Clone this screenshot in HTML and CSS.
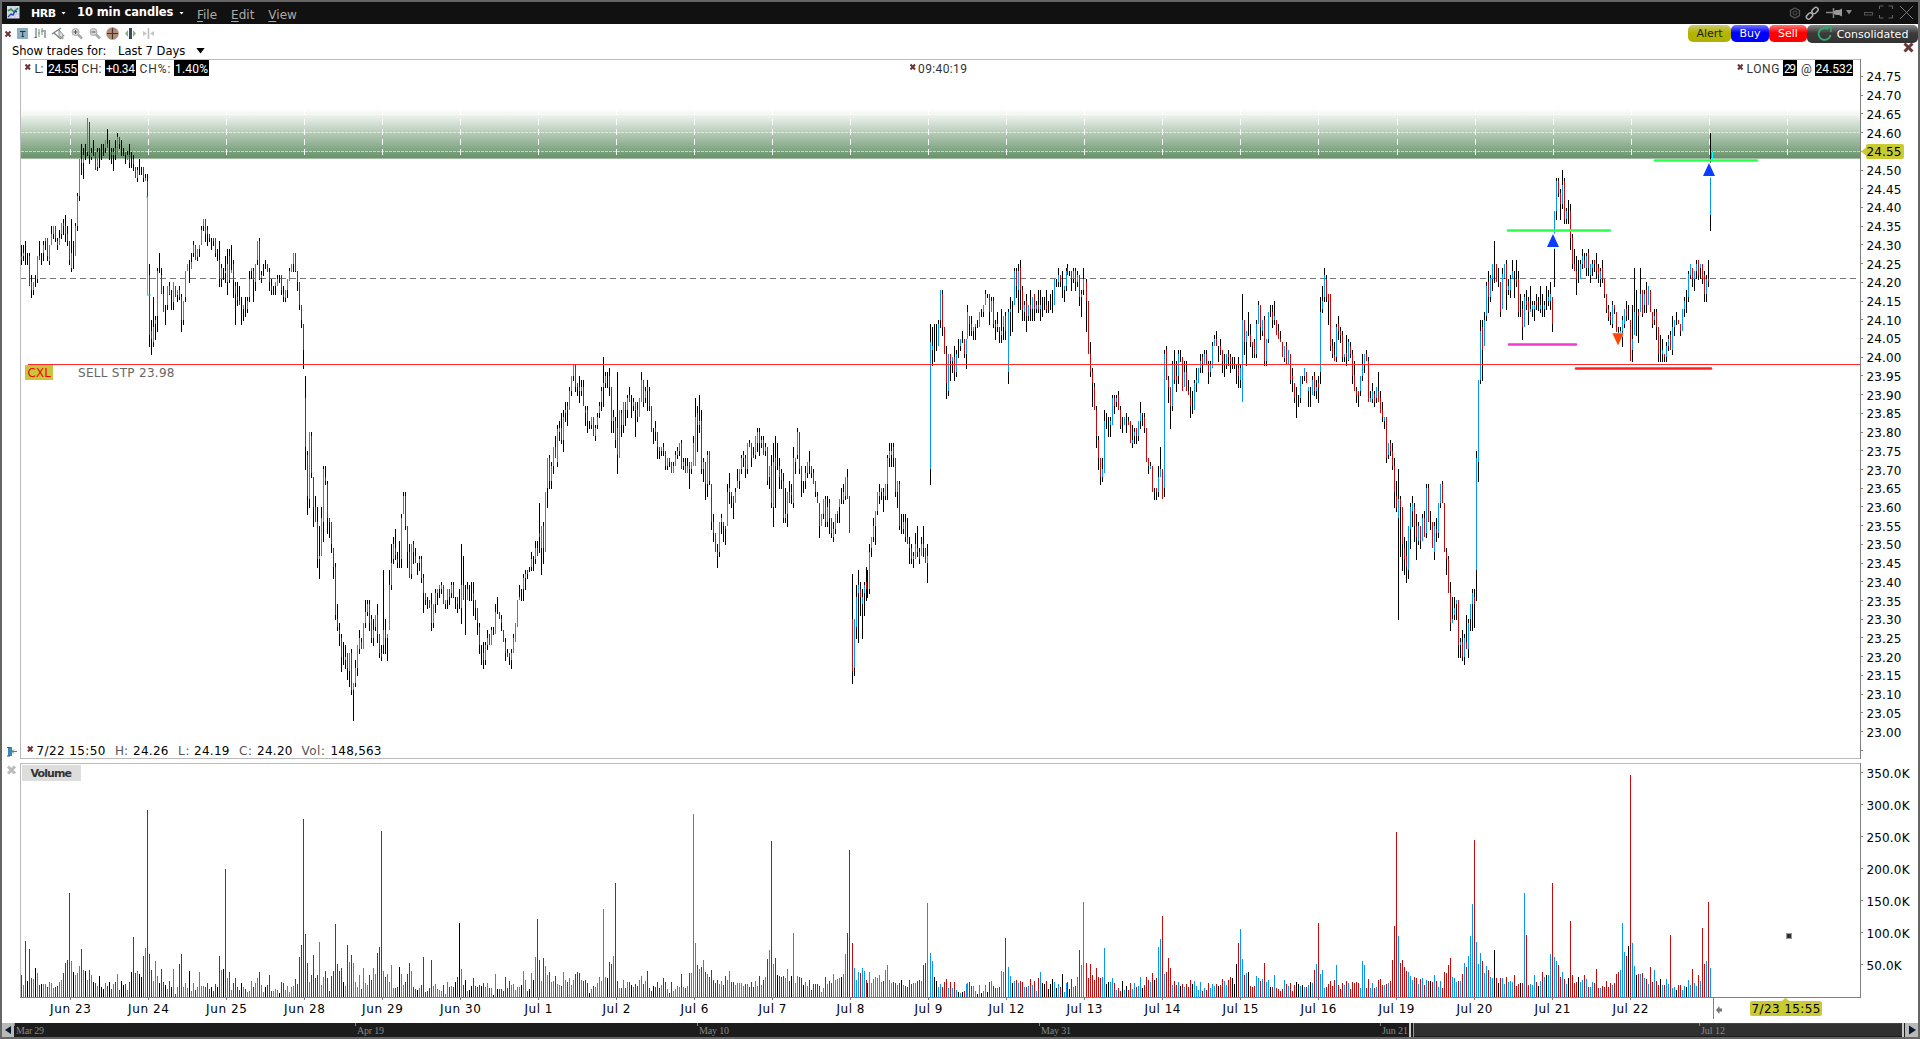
FILE: index.html
```html
<!DOCTYPE html>
<html lang="en">
<head>
<meta charset="utf-8">
<title>HRB - 10 min candles</title>
<link rel="stylesheet" href="styles.css">
</head>
<body>
<div class="window">
  <header class="titlebar">
    <svg class="app-icon" width="13" height="13" viewBox="0 0 13 13"><rect width="12.5" height="12.5" fill="#d9dcec"/><path d="M0 4h12M0 8h12M4 0v12M8 0v12" stroke="#b6b9d0" stroke-width=".6"/><path d="M1 5l3-2 3 3 4-4" stroke="#2a9a3c" stroke-width="1.6" fill="none"/><path d="M1 11l3-3 2 1 2-4 2 1" stroke="#2648a8" stroke-width="1.4" fill="none"/></svg>
    <b class="symbol">HRB</b><i class="caret"></i>
    <b class="interval">10 min candles</b><i class="caret"></i>
    <nav class="menu"><span><u>F</u>ile</span><span><u>E</u>dit</span><span><u>V</u>iew</span></nav>
    <svg class="window-tools" width="132" height="22" viewBox="1786 2 132 22" fill="none" stroke="#777">
      <g stroke="#555"><path d="M1795 8l4.500 2.500v5l-4.500 2.500l-4.500-2.500v-5z" stroke-width="1.300"/><circle cx="1795" cy="13" r="2"/></g>
      <g stroke="#aaa" stroke-width="1.500"><rect x="-3.500" y="-2.200" width="7" height="4.400" rx="2.200" transform="translate(1809.500 16) rotate(-45)"/><rect x="-3.500" y="-2.200" width="7" height="4.400" rx="2.200" transform="translate(1815 10.500) rotate(-45)"/></g>
      <path d="M1826 12.500h7M1833.500 8v10" stroke="#888" stroke-width="1.500"/><path d="M1834 11l2-1h3l3-1.500v8l-3-1.500h-3l-2-1z" fill="#999" stroke="none"/>
      <path d="M1846 10h6l-3 4.500z" fill="#888" stroke="none"/>
      <rect x="1864.500" y="12.500" width="8" height="2.500" stroke="#555"/>
      <path d="M1879.500 9v-3h4M1888.500 6h4v3M1892.500 15v3h-4M1883.500 18h-4v-3" stroke="#666"/>
      <path d="M1900 6l13 13M1913 6l-13 13" stroke="#777"/>
    </svg>
  </header>
  <div class="toolbar">
    <svg class="tools" width="160" height="18" viewBox="2 25 160 18" fill="none">
      <path d="M5.500 31.500l5 5M10.500 31.500l-5 5" stroke="#6b3333" stroke-width="2"/>
      <rect x="17" y="28" width="11" height="11" fill="#8fb0c0"/><path d="M20 31.500h5.500M22.700 31.500v5M21.500 36.500h2.500" stroke="#24333c"/>
      <path d="M36 28v10M34.500 37.500h2M45 30v8M44 31h-2.500" stroke="#51527f"/><path d="M39 29v8M42 28v7M38 33h2" stroke="#67a067"/>
      <path d="M52 34l9-6M54 33l7 6" stroke="#788" stroke-width="1.500"/><path d="M59 30v8l2-1.500 1.200 2.500 1-.6-1-2.400h2z" fill="#ddd" stroke="#777" stroke-width=".8"/>
      <g stroke="#aaa"><circle cx="75.500" cy="32" r="3.500" fill="#d7d7d7"/><circle cx="93.500" cy="32" r="3.500" fill="#d7d7d7"/><path d="M78 34.500l4 4M96 34.500l4 4" stroke-width="2.500"/></g><path d="M73.500 32h4M75.500 30v4M91.500 32h4" stroke="#555"/>
      <circle cx="112.500" cy="33.500" r="6.300" fill="#b18d78"/><path d="M107 33.500h11M112.500 28v11" stroke="#49352c" stroke-width="1.200"/>
      <path d="M130.500 28v11" stroke="#344b59" stroke-width="3"/><path d="M128 30v7l-3-3.500zM133 30v7l3-3.500z" fill="#8da88c"/>
      <path d="M148.500 28v11" stroke="#bbb" stroke-width="1.500"/><path d="M143 31v5l4-2.500zM154 31v5l-4-2.500z" fill="#c5c5c5"/>
    </svg>
    <div class="actions">
      <button class="pill alert">Alert</button><button class="pill buy">Buy</button><button class="pill sell">Sell</button><button class="pill feed"><svg width="16" height="16" viewBox="0 0 16 16"><path d="M11 3A6 6 0 1 0 13.500 9" fill="none" stroke="#2eaf72" stroke-width="1.700"/><path d="M9 1h5v5" fill="none" stroke="#2eaf72" stroke-width="1.400"/></svg>Consolidated</button>
    </div>
  </div>
  <div class="filter">
    <span class="filter-label">Show trades for:</span><span class="filter-value">Last 7 Days</span><i class="drop"></i>
    <svg class="close" width="12" height="12" viewBox="0 0 12 12"><path d="M1.500 1.500l8 8M9.500 1.500l-8 8" stroke="#6b3535" stroke-width="3"/></svg>
  </div>
  <svg class="panel price" viewBox="2 58 1916 703">
    <defs>
      <linearGradient id="zone" x1="0" y1="0" x2="0" y2="1"><stop offset="0" stop-color="#fff"/><stop offset=".12" stop-color="#eff4ef"/><stop offset="1" stop-color="#67936a"/></linearGradient>
      <path id="x" d="M0 0l4.500 5M4.500 0l-4.500 5" stroke="#6b3535" stroke-width="2"/>
    </defs>
    <rect x="21" y="109" width="1839" height="49" fill="url(#zone)"/>
    <path d="M21 158.500H1860" stroke="#a3bca3"/>
    <path d="M21 114.500H1860M21 132.500H1860M21 151.500H1860" stroke="#fff" stroke-opacity=".55" stroke-dasharray="3 1"/>
    <g id="zone-grid" stroke="#fff"></g>
    <path d="M20 278.500H1860" stroke="#777" stroke-dasharray="6 4" class="crisp"/>
    <path class="frame crisp" d="M1860 59.500H20.500V758.500H1860"/>
    <path class="axis crisp" d="M1860.500 59V759"/>
    <g id="candles" class="crisp"></g>
    <path d="M147.500 197V295M146 197h2M147 295h4" stroke="#2fc8c8" fill="none"/>
    <path d="M1712.500 152v10" stroke="#0ff"/>
    <path d="M28 364.500H1860" stroke="#ff2a2a" class="crisp"/>
    <g class="levels">
      <path d="M1655 160.500h102M1508 230.500h102" stroke="#2bff4e"/>
      <path d="M1509 344.500h67" stroke="#f03ad0"/><path d="M1576 368.500h135" stroke="#ff2020"/>
    </g>
    <path d="M1547 247.500h12v-1l-5-12h-2l-5 12zM1703 176.500h12v-1l-5-12h-2l-5 12z" fill="#fff" stroke="#fff" stroke-width="2"/>
    <path d="M1547 247l6-13 6 13zM1703 176l6-13 6 13z" fill="#0a3dff"/><path d="M1612 333h12l-6 13z" fill="#ff4409" stroke="#fff" stroke-width=".5"/>
    <rect x="25" y="365" width="28" height="15" fill="#c7c73f"/><text x="27.500" y="377" textLength="23.500" fill="#f00">CXL</text>
    <text x="78" y="377" textLength="96.500" fill="#666">SELL STP 23.98</text>
    <g class="readout">
      <use href="#x" x="25.500" y="64.500"/><path d="M47 60h31v16H47zM105 60h31v16h-31zM174 60h35v16h-35zM1783 60h14v16h-14zM1815 60h38v16h-38z" fill="#000"/>
      <text x="34.500" y="73" textLength="9">L:</text><text x="48" y="73" textLength="29" class="inv">24.55</text>
      <text x="81.500" y="73" textLength="20">CH:</text><text x="106" y="73" textLength="29" class="inv">+0.34</text>
      <text x="139.500" y="73" textLength="31">CH%:</text><text x="175" y="73" textLength="33" class="inv">1.40%</text>
      <use href="#x" x="910.500" y="64.500"/><text x="918" y="73" textLength="49">09:40:19</text>
      <use href="#x" x="1738" y="64.500"/><text x="1746.500" y="73" textLength="33">LONG</text><text x="1784" y="73" textLength="12" class="inv">29</text><text x="1801" y="73" textLength="11">@</text><text x="1815.500" y="73" textLength="37" class="inv">24.532</text>
    </g>
    <g class="legend">
      <use href="#x" x="28" y="746.500"/><text x="36.500" y="755" textLength="69">7/22 15:50</text>
      <text x="115" y="755" textLength="13" class="dim">H:</text><text x="133" y="755" textLength="35.500">24.26</text>
      <text x="178" y="755" textLength="11.500" class="dim">L:</text><text x="194" y="755" textLength="35.500">24.19</text>
      <text x="239" y="755" textLength="13" class="dim">C:</text><text x="257" y="755" textLength="35.500">24.20</text>
      <text x="301.500" y="755" textLength="23.500" class="dim">Vol:</text><text x="330.500" y="755" textLength="51">148,563</text>
    </g>
    <path d="M8 747h4v9H8z" fill="#3d86b8"/><path d="M7 747.500h3M7 756h3" stroke="#235f90"/><path d="M17 751.500h-5M14 749.500l-2 2 2 2" stroke="#20a050" fill="none"/>
    <g id="price-axis"></g>
    <path d="M1861 151.500l5-4v-1.500q0-2 2-2h34q2 0 2 2v11q0 2-2 2h-34q-2 0-2-2v-1.500z" fill="#caca33"/><text x="1866.500" y="156" textLength="35">24.55</text>
  </svg>
  <svg class="panel volume" viewBox="2 761 1916 262">
    <path class="frame crisp" d="M1860 763.500H20.500V997"/>
    <path class="axis crisp" d="M20 997.500H1860.500V763M1713.500 998v21"/>
    <rect x="22" y="765" width="59" height="16" fill="#ddd"/><text x="30.500" y="777" textLength="41.500" class="tag">Volume</text>
    <path d="M8 766.500l7 7M15 766.500l-7 7" stroke="#bbb" stroke-width="3"/>
    <g id="volume-bars" class="crisp"></g>
    <rect x="1786.500" y="933.500" width="5" height="5" fill="#333" stroke="#9a9a9a"/>
    <path d="M1716 1010l3.500-4v2.500h2.500v3h-2.500v2.500z" fill="#777"/>
    <rect x="1750" y="1001" width="72" height="15" rx="2" fill="#caca33"/><path d="M1782 1001l3.500-3.500 3.500 3.500z" fill="#caca33"/>
    <text x="1751.500" y="1013" textLength="69">7/23 15:55</text>
    <g id="volume-axis"></g>
    <g id="date-axis"></g>
  </svg>
  <svg class="navigator" viewBox="2 1023 1916 14">
    <rect x="2" y="1023" width="1916" height="14" fill="#1c1c1c"/>
    <rect x="1413" y="1023" width="489" height="13" fill="#303030"/><path d="M1413 1023.500h489" stroke="#444"/>
    <path d="M1410 1023v14M1903 1023v14" stroke="#fff" stroke-width="1.500"/><path d="M1413.500 1023v14" stroke="#999"/>
    <rect x="2" y="1023" width="12" height="14" fill="#b9b9b9"/><rect x="1905" y="1023" width="13" height="14" fill="#b9b9b9"/>
    <path d="M5 1030l6-4v8zM1916 1030l-7-4.500v9z" fill="#07182c"/>
    <path d="M14.500 1023v3M355.500 1023v3M697.500 1023v3M1039.500 1023v3M1380.500 1023v3M1699.500 1023v3" stroke="#888"/>
    <text x="16" y="1034" textLength="28">Mar 29</text><text x="357" y="1034" textLength="27">Apr 19</text><text x="699" y="1034" textLength="30">May 10</text>
    <text x="1041" y="1034" textLength="30">May 31</text><text x="1382" y="1034" textLength="26">Jun 21</text><text x="1701" y="1034" textLength="24">Jul 12</text>
  </svg>
</div>
<script src="chart.js"></script>
</body>
</html>
```

FILE: styles.css
```css
* { box-sizing: border-box; }
body { margin: 0; background: #666; font-family: "DejaVu Sans", Verdana, sans-serif; }
.window { display: flex; flex-direction: column; width: 1920px; height: 1039px; padding: 2px; background: #666; overflow: hidden; }
.titlebar { display: flex; align-items: center; flex: none; height: 22px; padding-left: 5px; background: #111; color: #fff; }
.app-icon { margin-right: 11px; margin-top: -2px; }
.symbol { width: 30px; font-size: 11px; letter-spacing: -.5px; }
.interval { width: 102px; font-size: 11.500px; letter-spacing: -.1px; margin-top: -2px; }
.caret { width: 5px; height: 3px; margin-right: 11px; background: #fff; clip-path: polygon(0 0, 100% 0, 50% 100%); }
.menu { display: flex; gap: 14px; margin-left: 2px; color: #aaa; font-size: 12px; padding-top: 3px; }
.menu u { text-underline-offset: 2px; }
.window-tools { margin-left: auto; }
.toolbar { display: flex; flex: none; justify-content: space-between; height: 19px; padding-top: 1px; background: #fff; }
.actions { display: flex; height: 17px; }
.pill { display: flex; align-items: center; justify-content: center; border: 0; border-radius: 5px; padding: 0; color: #fff; font: 11px "DejaVu Sans", Verdana, sans-serif; }
.alert { width: 43px; color: #222; background: linear-gradient(#caca72, #b4b400 45%, #b0b000); }
.buy { width: 38px; background: linear-gradient(#7777ff, #0000ff 45%); }
.sell { width: 38px; background: linear-gradient(#ff7777, #ff0000 45%); }
.feed { width: 111px; height: 18px; gap: 4px; background: linear-gradient(#888, #3b3b3b 45%, #333); }
.filter { display: flex; flex: none; align-items: center; height: 15px; padding: 0 3px 0 10px; background: #fff; color: #000; font-size: 11.500px; }
.filter-label { width: 106px; }
.filter-value { width: 78px; }
.drop { width: 9px; height: 6px; background: #000; clip-path: polygon(0 0, 100% 0, 50% 100%); }
.close { margin-left: auto; margin-top: -5px; }
.panel, .navigator { display: block; flex: none; width: 1916px; background: #fff; }
.price { height: 703px; }
.volume { height: 262px; }
.navigator { height: 14px; }
.crisp { shape-rendering: crispEdges; }
.frame { fill: none; stroke: #bbb; }
.axis { fill: none; stroke: #808080; }
.panel text { font-size: 12px; }
.levels path { stroke-width: 2.500; stroke-linecap: round; }
.readout text { font-family: Roboto, sans-serif; font-size: 12px; fill: #333; }
.readout .inv { fill: #fff; }
.legend .dim { fill: #555; }
.panel .tag { font-size: 11px; font-weight: bold; fill: #333; }
.navigator text { font: 10px "Liberation Serif", serif; fill: #888; }
.up { stroke: #0a96f5; }
.down { stroke: #c80a0a; }
.flat { stroke: #000; }
```

FILE: chart.js
```js
// Candle runs: [x origin, y origin, first x, y units per pixel, data].
// Positions are in thirds of a pixel across; each candle is high-low, then
// u/d and the body's extent (omitted when the body fills the whole range).
// "+" widens and "-" narrows the step before the next candle by one pixel.
const candleRuns = [
[0,100,64,3,`435-494d468-480 435-483u458-468 423-494 459-494 459-558d468-558 525-594d546-570 546-585u546-570 525-561 468-549u468-537 423-480d468-480 459-494 423-483u435-460 414-450u414-423 414-483d414-468 435-494u435-483 378-435u402-435 378-417u378-402 378-426d378-414 414-450d423-435 390-435u414-435 369-417u369-402 357-405d369-378 345-426d378-402 378-438d402-423 423-494d423-480 357-516u459-504 423-507 369-468u378-468 279-393u289-378 177-303u177-289 132-225d177-190 144-237u165-190 132-180 54-168u54-156 66-192d66-165 144-180u160-171 120-168 156-210d 144-213u156-201 144-204 132-180 132-168 120-159u120-144 87-144d132-144 120-180 144-192d156-165 144-213u156-165 120-180d144-165 99-165u111-165 111-147d111-132 120-168 144-168 156-192d156-165 153-180u165-180 132-204d165-190 156-204 165-213d177-192 201-234d 201-246u210-234 177-225 201-225 201-246d201-234 222-243u234-243 222-291d243-291 492-741d525-705 660-765d693-717 591-741u682-726 648-720u660-672 504-696u513-648 459-519 504-582d525-582 558-636d582-636 615-675 558-630u558-615 546-585d558-582 570-630 546-630u546-606 558-591d 570-606u570-585 558-600d570-591 582-696d591-660 603-675u603-660 513-606u513-591 492-513u 480-549 458-507u486-507 423-470u435-459 435-480d 447-483u447-471 435-471u435-447 378-435u390-435 357-393u357-378 357-426d357-402 378-438d390-402 402-426d402-414 414-450 414-438d414-423 414-471d414-459 447-483 423-561d480-537 492-561u504-537 504-540 468-549u513-520 447-585u492-546 447-549d468-540 435-519u510-519 480-594d492-540 546-675d558-582 546-618d590-600 558-615d603-615 591-675 615-663u615-627 591-651 591-639u603-627 513-606u537-591 504-537u504-513 504-606d513-540 492-573u492-546 423-495u423-480 414-540d423-537 513-549u525-534 492-528 480-507 492-516d 504-573d516-546 537-585d558-570 558-585 546-585u546-558 525-558u537-558 525-549 525-585d525-570 558-606d582-590 570-606u570-594 537-594u537-570 504-543u513-543 492-516u 459-516u459-492 459-516d459-513 513-573d513-546 546-630d546-615 615-684d615-660 672-807d672-750`],
[300,350,16,3,`78-360d144-291 303-495d315-438 246-474u246-447 246-384d258-369 381-531d381-471 438-516d471-516 471-654d516-627 528-687u618-627 471-618u504-618 348-576u357-516 348-405d381-393 393-552d402-504 504-564d504-516 516-609d516-582 594-687d594-651 639-810d651-795 762-843d807-831 819-888d840-852 852-966d864-921 876-945 885-957u921-930 909-990d909-954 909-1011u909-963 897-1035d909-1020 999-1113u999-1020 930-1011u954-999 885-978u885-954 840-912u864-897 864-897d876-897 819-897u 750-834u786-819 750-798u762-786 750-843d762-819 795-879d807-864 807-888u840-864 795-843u795-831 762-879d795-852 852-924d852-909 885-933d909-921 660-912u840-885 807-912d840-864 852-933u852-864 660-840u705-840 582-720u639-705 561-642u582-627 537-630d594-615 606-654d627-639 573-654 492-654u504-627 426-492u438-492 426-540d438-528 528-654d528-606 582-684d606-684 582-687u582-672 573-642d582-606 594-639d618-639 639-675 618-663u627-639 618-699d627-684 672-789d684-729 729-765d729-750 741-777 750-774d 729-843d762-819 762-834u762-819 717-789u729-762 717-765u717-729 705-744u705-717 696-732u705-717 705-762d 750-777u750-762 717-777u717-750 717-765d717-741 696-744u705-730 696-744d705-741 741-777 741-789d741-762 717-777 582-822u705-774 618-750d705-750 705-855 696-750u717-750 705-753 696-753 696-798d729-750 750-810d750-774 774-855d774-819 819-912d831-885 885-945 876-957d909-930 876-945u885-930 840-900u864-885 852-885d 831-885u840-885 831-855 762-852u786-852 741-792 786-807d 795-843d807-819 840-876d 864-933d876-909 897-921d909-921 909-945d909-921 897-957u909-930 852-909u864-909 819-876u 750-831u 705-750u741-750 717-753 672-753u684-717 660-720u672-684 660-687d660-672 651-666 606-663u627-651 618-663 573-642u594-627 573-618d594-618 459-609d549-561 528-675u528-594 516-642d528-594 426-606u 324-474u324-414 315-417d324-393 336-417u348-393 291-372u291-348 258-324d291-324 225-351u237-336 213-273u234-246 189-282d234-270 180-306u201-270 156-216u180-189 156-228d168-180 111-180u123-180 78-138u78-123 45-93u45-78 45-126d45-111 99-138d99-111 78-159d111-123 90-138u111-123 90-168d111-168 168-228d180-189 168-249d180-213 213-237 201-237u201-225 201-258d 225-273u234-258 189-237u201-225 156-204u168-189 111-183u123-156 21-171u99-111 66-114u78-99 66-114 54-138d78-111 111-249d111-213 180-249u201-213 201-294d213-270 66-372d234-315 180-324u 180-261d189-225 156-249u156-225 156-228d156-180 135-204u144-180 111-156d135-156 135-204 144-183u156-168 156-261d156-180 156-216d180-201 144-201u 66-156u90-156 90-171d90-156 111-159u123-144 90-183d111-123 111-183d123-168 168-246d 234-282 213-273d234-246 246-327d246-291 291-327d291-303 291-318u291-303 279-318d291-303 303-360d303-348 324-360u324-348 324-351d324-336 336-369d 336-369u348-369 303-348u315-348 291-327u303-315 279-318u279-303 270-357d279-357 324-360u336-348 324-369d348-369 324-369u348-369 336-417d336-357 336-372u336-357`],
[680,240,40,3,`588-678u609-678 474-678u531-678 498-636d519-555 465-579u543-555 510-702d543-687 654-726u666-687 666-780d666-732 633-771u645-732 633-735d633-723 732-870d732-846 822-906d846-879 879-936d 912-984d936-948 846-951u846-936 822-882u834-846 846-906d846-858 858-915d858-867 732-858u756-858 699-792u744-756 756-804d756-768 768-837d768-789 744-789u756-789 687-744u723-744 687-747u687-723 645-702u654-687 633-681u645-654 645-714d654-687 609-702u609-687 600-621d609-621 609-681d609-654 621-654d645-654 588-657u588-645 564-636u576-609 564-648d576-609 588-624u600-609 588-645d600-645 609-648u621-633 621-735d621-723 678-747u678-711 645-804d678-789 609-861u666-801 588-804d654-678 609-690 654-747d678-711 687-747d699-720 699-849d723-834 744-849u822-834 756-861u756-822 723-789d756-789 732-792d756-765 621-804u654-789 654-702u654-666 564-657u576-645 576-702d576-687 678-771d678-723 723-759 678-747u699-723 666-714u666-699 633-702d666-678 678-714d678-699 687-732d699-732 723-771d723-756 756-789d768-789 789-894d789-858 822-858u 777-837u777-822 768-861d777-846 768-861u801-846 777-882d789-834 834-894d834-879 846-906u867-891 822-882u822-867 813-849u813-822 777-849u777-801 744-792 732-792u756-780 711-780u711-768 687-777d711-777 768-879d + 1002-1332d1137-1293 1137-1308u1137-1284 1035-1197u1071-1161 990-1209u1035-1059 1026-1128d1047-1071 1047-1197u1071-1092 1026-1128u1035-1059 981-1083d1026-1047 - 990-1074 912-1062u936-1047 891-951u891-924 834-906u858-891 813-915u813-858 756-825u756-813 732-792u756-768 744-780u744-756 744-816d756-768 732-780u732-768 645-780u654-732 609-681u633-654 609-681u633-645 609-681d621-654 654-771d654-756 723-804u723-756 723-870d732-858 822-882 822-882u846-867 822-906d846-891 834-912d891-912 891-972d912-924 912-972d924-957 936-984u948-957 879-957u912-957 858-951d924-936 924-972d936-957 891-948u912-948 858-951d912-924 924-969d 912-1029u948-969 + 252-735u306-687 261-378u318-330 252-366 252-333 240-318u252-318 150-264u150-240 150-288d162-261 261-342d 318-477d342-429 342-468u342-453 342-423d342-363 351-399u351-363 318-423d351-396 330-411u342-396 297-354 297-333u297-318 273-309 297-354d297-342 297-387u297-342 - 195-297u216-297 228-288d228-252 228-288d252-273 261-300u261-273 252-300u252-261 240-264 216-261u 207-231 195-231u195-216 150-195u162-195 162-174 162-255d162-216 171-216u183-216 171-264d183-252 240-300d252-261 216-276u252-261 261-309d261-273 207-309u273-285 228-300u228-261 216-300d228-273 + 207-432u216-396 171-288u207-216 183-276 84-195u93-195 84-174d93-138 72-219u93-150 60-210d84-150 138-243d150-210 183-243u195-216 162-276d183-228 195-243u195-228 150-243d195-207 171-243u171-207 162-243d162-207 183-219u195-207 150-219d195-207 150-243u195-207 171-231 171-210 150-219d195-207 183-219 162-210 150-219 117-195u 117-141 84-141u105-126 105-141d105-126 93-174`],
[1060,240,13,3,`138-186u138-150 84-153u93-138 - 72-105d84-105 93-108 93-153d93-117 84-129u93-117 84-153d93-126 93-141u105-126 105-198d105-171 150-231u162-171 84-165u117-150 + 117-276d126-183 183-342d 306-411d342-396 384-501d396-429 429-510d441-510 498-624d510-588 588-690d600-654 654-735d654-711 654-726u687-711 510-699u543-699 519-567 531-591 531-591u543-555 465-555u474-555 465-522d474-498 465-501u474-486 453-510d465-510 498-567d510-555 531-579 531-555u 519-579 531-555d543-555 543-609d 555-624u600-609 564-612u576-588 564-612d564-588 543-603u543-588 486-567u519-543 519-558 519-579d531-564 564-666d 654-702d654-678 666-687u678-687 678-756d 744-780 744-780d744-756 678-771u711-756 621-711u687-711 687-777d 330-771u342-744 318-420d330-420 408-489d420-441 441-567d441-498 363-513u375-498 330-432d375-420 363-456d408-420 330-432u342-408 330-366 351-453d 363-441u396-441 363-453d396-453 420-465d453-465 441-534d474-498 453-522 420-510u429-510 384-456u420-429 384-429u 342-399u363-384 342-399d351-369 330-372u342-372 330-375d342-375 363-432d375-396 363-411u372-396 306-384u318-384 285-318u297-318 273-318d297-318 318-366 297-345d318-330 330-399d330-363 342-411 342-387u342-375 330-378d342-351 342-399d351-366 351-387 351-387 375-432 351-444d384-408 375-444u384-420 162-486u240-486 240-345d240-306 273-378u273-306 216-288 252-321d285-306 306-354d306-318 297-354d306-342 240-354u252-342 183-252u195-252 195-300d195-261 240-288u240-273 228-378d240-363 297-378u297-363 216-309u216-297 195-231 195-264d216-240 183-255u228-240 240-285d 252-297d273-297 273-306d297-306 306-351d 318-366u318-354 306-375d318-375 330-375u 342-432d342-420 384-456d408-420 429-489d429-474 441-534 465-501 408-489u408-474 408-432 384-423u384-408 396-429d 441-501u441-453 441-501 408-465u420-465 396-468d408-453 420-477u441-453 408-489d429-441 171-432u216-396 138-219u183-207 84-186u105-171 105-186d117-171 162-255d162-183 162-333d162-318 297-354d318-342 306-363d345-363 252-366u261-351 228-300d252-273 261-309d273-285 273-366d285-351 342-366u342-351 285-378d339-351 297-363u306-360 306-354d318-342 330-432d342-408 363-453d405-453 441-489d453-465 453-501d453-465 408-468u408-453 342-423u375-408 342-399u342-375 330-363d342-363 351-486d363-486`],
[1370,130,1,2.8,`731-762u750-762 708-764u731-752 731-776d740-762 720-764u720-750 678-762d731-762 731-792d750-792 762-818d783-804 804-837u804-815 804-932d804-918 876-921u876-910 868-913d876-899 876-952d899-941 918-1058d941-1014 983-1070d1025-1056 949-1372u1033-1086 1025-1196d1033-1056 1056-1235d1056-1159 1140-1246d1170-1201 1151-1268d1193-1224 1109-1257u1109-1232 1044-1173u1056-1117 1025-1112u1044-1067 1044-1154d1056-1109 1075-1204d1109-1140 1098-1162u1109-1151 1109-1173d1109-1151 1075-1151u1086-1151 1067-1140d1086-1140 991-1142u1002-1128 991-1098d1002-1098 1067-1120 1098-1170d 1098-1204u1109-1182 1086-1154d1117-1128 1044-1142u1044-1128 991-1058u991-1044 983-1044d991-1044 1044-1182d 1170-1246d1182-1201 1193-1296d1201-1296 1266-1403d1296-1380 1308-1380u1369-1380 1308-1372u1338-1357 1316-1372u1316-1327 1316-1478d1316-1442 1422-1478u1434-1442 1400-1487d1434-1476 1411-1498u1422-1476 1358-1453d1434-1453 1369-1478u1380-1453 1327-1403u1327-1369 1285-1403u1296-1327 1285-1394d1308-1327 899-1319u918-1232 700-986u700-930 532-711u563-700 532-703d552-616 510-605u532-605 426-535u437-521 395-512d426-468 406-482u415-468 375-451u375-417 311-428 375-426d 386-440 426-524d426-510 386-501u404-501 375-417u375-415 364-504d375-448 417-462u437-448 406-470u417-448 364-417u395-417 395-470 364-440d417-426 395-524d417-510 459-524 479-588d501-552 459-552u468-552 448-504d479-490 468-546d479-510 437-510u501-510 479-524u490-501 479-535u490-501 459-504d479-490 468-507 437-512u490-501 459-524 479-524u490-501 437-504 448-493u468-479 426-504u459-479 468-566d468-543 227-440u227-333 134-252u143-227 134-188d143-176 165-252d176-207 112-221u154-207 134-263d143-249 218-263u227-249 196-263 207-336d227-302 291-389d302-375 333-395d375-395 353-462d395-417 364-428 364-417u375-417 333-389u353-375 344-386d364-386 344-409u353-386 333-409d344-386 375-428u375-406 364-409u375-386 364-398d364-375 344-417d375-395 375-428d386-406 386-440u395-417 364-428d386-417 417-470d417-459 459-512d459-501 490-535d501-524 510-546d521-532 479-554u490-543 490-515d490-501 510-566d 552-575 552-570u563-570 521-608u532-563 501-554u501-543 479-535d501-521 490-532 532-647d 490-650u585-616 386-574u510-574 448-577 501-596d510-521 386-510u459-510 448-524d448-515 448-512u459-490 426-512d448-490 437-490u 448-510d 510-554d510-543 501-546u521-532 501-588d510-552 552-650d552-627 574-650 585-650u616-627 627-650d627-636 594-650u605-636 574-619u585-605 563-616d574-616 521-630u552-616 532-577u532-552 510-546 532-543d 543-577d543-563 501-563u 468-524u479-501 448-512 395-482u404-468 375-417u375-406 386-440d386-417 395-451u395-417 364-417u375-395 364-420d364-406 375-417u375-386 375-431d375-417 395-482d406-459 406-482u417-459 364-440d417-426 8-283u120-238`]
];

// Volume runs: [x origin, first x, baseline, data]; each bar is its colour and top.
const volumeRuns = [
[0,64,831,`d765 u795 d663 k783 d687 d774 u777 k744 u759 d795 k792 u792 u792 d801 u786 u789 u804 d801 d798 u786 u780 d759 d729 d720 d519 u723 k756 u765 u759 u738 d687 u750 k753 u780 d750 u765 k786 d789 u798 k768 k801 k807 u789 d798 k786 d807 u792 d786 u762 d810 k783 k795 d792 u810 d786 k756 d651 d759 u753 k762 k771 d708 u684 d270 d702 d750 u783 u723 u768 k789 d747 d786 k795 u807 d783 k801 u747 d822 u801 d732 d702 u801 u789 u804 k753 u813 u789 d810 u801 u756 u798 u798 d801 d789 d807 k801 d813 d792 k801 d708 u750 k747 d447 u774 d756 u810 d789 d774 d801 d810 k789 u801 d807 u816 u813 u783 d801 u789 u774 d756 u795 u816 k801 d795 d765 d813 u813 u807 u810 k819 d786 d789 u810 u798 u816 u801 u798 d777 d792 d711 d675 d297 d642 d729 u786 d765 d705 d774 d765 u666 u795 u771 d753 d774 d813 d768 d753 d612 d732 d753 d744 k786 u798 d675 u726 d705 u729 u786 u801 u765 d807 u744 u789 u795 d765 d780 u744 u762 d699 d681 d333 u753 d771 u762 u786 u735 u804 d804 d801 k741`],
[395,19,591,`u522 u555 d546 d522 d489 u513 d561 d567 k570 u564 d555 d471 d576 d573 d564 d480 u558 u552 u567 u570 u573 d555 u582 u546 d561 u558 d561 k546 d531 k369 u507 d555 k540 u573 k570 k558 d534 d558 d561 d555 k558 d549 u561 u549 d564 u564 k585 u522 k567 d567 d567 d573 d531 d564 d543 u555 u552 u570 u561 u561 k555 u513 u540 d573 k567 u519 k540 u471 d357 d480 u543 d474 u498 u525 d516 u546 u543 d528 u552 u555 d558 u516 u540 d546 u534 u555 u540 d522 d516 d519 u540 d543 d540 d549 k579 u567 d558 u561 u549 u531 u543 u327 u531 k534 d486 d492 u468 d249 d543 u564 d564 u540 d564 u546 d546 k555 u561 d552 d558 u540 u528 d552 u543 d513 d564 d573 k558 d561 d546 d564 u555 d534 d546 u567 d579 d546 u573 u567 u558 u561 d522 u561 d564 u558 d519 u519 u42 u429 d495 u507 d501 u480 d516 u522 d531 d510 d540 d549 d540 u552 u543 d555 d528 u540 u513 d546 d546 u555 u549 u549 u549 u558 d552 u552 d561 d546 d561 u543 u558 d528 u555 d540 u531 d477 u450 d123 u492 d474`],
[775,7,591,`k525 d528 d531 d528 u534 u507 d543 k528 u399 u549 u528 d531 d534 k555 u546 u558 d540 d570 d552 d552 d552 d558 u576 u564 d531 u552 d543 d549 u522 u540 u537 u534 k531 u522 u462 d399 d150 + d429 u504 u540 u516 d519 u504 u513 d540 - k549 u516 u549 u537 u531 u534 u525 u546 d543 u510 u495 u540 u549 d546 d549 u555 d549 k540 u555 d558 d561 d540 d552 u549 u549 d543 d540 u543 d495 d489 u309 + u459 u483 k531 k543 u561 u552 d561 d546 d537 u564 d546 u564 d546 u570 k576 u579 k576 d573 u552 - u549 d546 d558 u558 u573 k582 u555 k579 u573 u555 k576 d546 u543 d558 d564 u564 d561 u513 u516 d414 + u501 u528 k549 u543 d540 u549 d543 d546 u561 d561 u558 d537 u555 d543 u573 d534 u516 k549 k552 d543 k567 k552 k537 u546 k564 u552 d561 k522 u576 u549 - d546 k567 d537 u561 d558 u531 d450 u495 u306 + d489 d534 d492 d525 d540 d504 d531 d534 u531 u444 k552 k546 u546 u534 d549 u570 d564 d573 k543 u570 k558 d570 d549 u567 u549 d561 u558 u531 k564 d555 d531 d540 u546 d519 k540 d534 u441`],
[1150,31,591,`u417 d348 u522 d516 d474 d504 u555 d543 d555 u546 k558 d552 u561 d552 d561 d540 k552 u543 u558 u570 u546 d573 u564 d570 d549 u564 u552 u558 d552 k558 d555 d537 u543 u555 d540 d531 k534 k552 k492 d429 u387 u477 d525 u519 k516 d558 d561 d558 u528 u534 d543 u537 d489 u546 u540 k561 d561 u525 d564 d567 d573 d567 u540 d552 u558 d549 d573 d555 k546 k552 u558 k555 u561 d561 u555 k546 u549 d510 u492 d369 u522 u510 u564 d561 d552 d543 d558 d540 u495 d555 d567 d549 u555 d543 u549 d567 d546 d549 d546 d549 u564 u483 u495 d564 d537 u564 u549 d564 u561 d540 d537 d555 u555 d552 u549 d543 d480 d378 d96 u408 d489 d480 d501 d513 u516 u528 u540 d531 d534 u552 d537 u534 d555 u540 d543 k543 d546 u525 d543 u561 u543 d564 d516 d519 d495 d474 u531 u534 u546 d543 u543 d522 u489 d501 u468 u408 u312 d120 u426 u492 u459 d483 u519 u498 d510 u531 u534 k450 d534 k549 d534 u534 u552 d531 u546 u543 u546 d525 d558 d552 k549 d549 u279`],
[1520,19,771,`d585 d735 u732 u735 u705 d726 k738 u723 d696 u711 k705 u705 u642 d429 u651 u663 d675 d711 u696 d717 u732 k714 d543 d705 d729 d726 k711 u726 u720 d705 u717 d741 u741 u726 d729 d687 d744 u744 d738 d741 d723 d741 d729 u735 d729 d702 d696 u690 u549 u636 d648 k618 d105 u609 u678 k705 d702 u702 d699 u714 d717 u732 d681 d726 u690 d723 d735 k717 u735 d735 u717 u732 d585 u744 u741 k750 d735 d735 u750 u738 k741 u720 u735 d687 u729 u738 d705 u723 d564 d672 u663 d486 u684`]
];

const el = id => document.getElementById(id);
const paths = p => `<path class="flat" d="${p.k}"/><path class="up" d="${p.u}"/><path class="down" d="${p.d}"/>`;

function walk(first, data, draw) {
  let x = first - 6;
  for (const token of data.split(' ')) {
    if (token === '+') x += 3;
    else if (token === '-') x -= 3;
    else draw(x += 6, token);
  }
}

const candles = { k: '', u: '', d: '' };
for (const [ox, oy, first, scale, data] of candleRuns) {
  const py = v => oy + Math.round(v / scale);
  walk(first, data, (x, token) => {
    const [, high, low, dir, top, bottom] = token.match(/(\d+)-(\d+)(?:([ud])(?:(\d+)-(\d+))?)?/);
    const px = ox + Math.floor(x / 3) + 0.5;
    candles.k += `M${px} ${py(high)}V${py(low)}`;
    if (dir) candles[dir] += `M${px} ${py(top || high)}V${py(bottom || low)}`;
  });
}
el('candles').innerHTML = paths(candles);

const bars = { k: '', u: '', d: '' };
for (const [ox, first, base, data] of volumeRuns) {
  walk(first, data, (x, token) => {
    bars[token[0]] += `M${ox + Math.floor(x / 3) + 0.5} 997v${-Math.round((base - token.slice(1)) / 3)}`;
  });
}
el('volume-bars').innerHTML = paths(bars);

let out = '';
for (let i = 0; i < 37; i++) {
  const y = 76.4 + i * 18.72;
  out += `<path class="axis crisp" d="M1861 ${Math.floor(y) + 0.5}h2"/>`;
  if (i < 36 && i !== 4) out += `<text x="1866.500" y="${Math.round(y + 5)}" textLength="35">${(24.75 - i * 0.05).toFixed(2)}</text>`;
}
el('price-axis').innerHTML = out;

out = '';
for (let i = 0; i < 7; i++) {
  const y = 772 + i * 32;
  out += `<path class="axis crisp" d="M1861 ${y + 0.5}h2"/><text x="1866.500" y="${y + 6}" textLength="${i < 6 ? 43 : 35}">${350 - i * 50}.0K</text>`;
}
el('volume-axis').innerHTML = out;

const days = ['Jun 23', 'Jun 24', 'Jun 25', 'Jun 28', 'Jun 29', 'Jun 30', 'Jul 1', 'Jul 2', 'Jul 6', 'Jul 7', 'Jul 8', 'Jul 9', 'Jul 12', 'Jul 13', 'Jul 14', 'Jul 15', 'Jul 16', 'Jul 19', 'Jul 20', 'Jul 21', 'Jul 22'];
const widths = { 4: 0, 5: 28, 6: 36 };
out = '';
days.forEach((day, i) => {
  const x = 70.5 + i * 78;
  const w = day.startsWith('Jun') ? 41 : widths[day.length];
  out += `<path class="axis crisp" d="M${x} 998v2"/><text x="${x - w / 2}" y="1013" textLength="${w}">${day}</text>`;
});
el('date-axis').innerHTML = out;

out = '';
for (let i = 0; i < 23; i++) out += `<path d="M${70.5 + i * 78 + (i > 16 ? 1 : 0)} 109V158" stroke-dasharray="6 4"/>`;
el('zone-grid').innerHTML = out;
```
